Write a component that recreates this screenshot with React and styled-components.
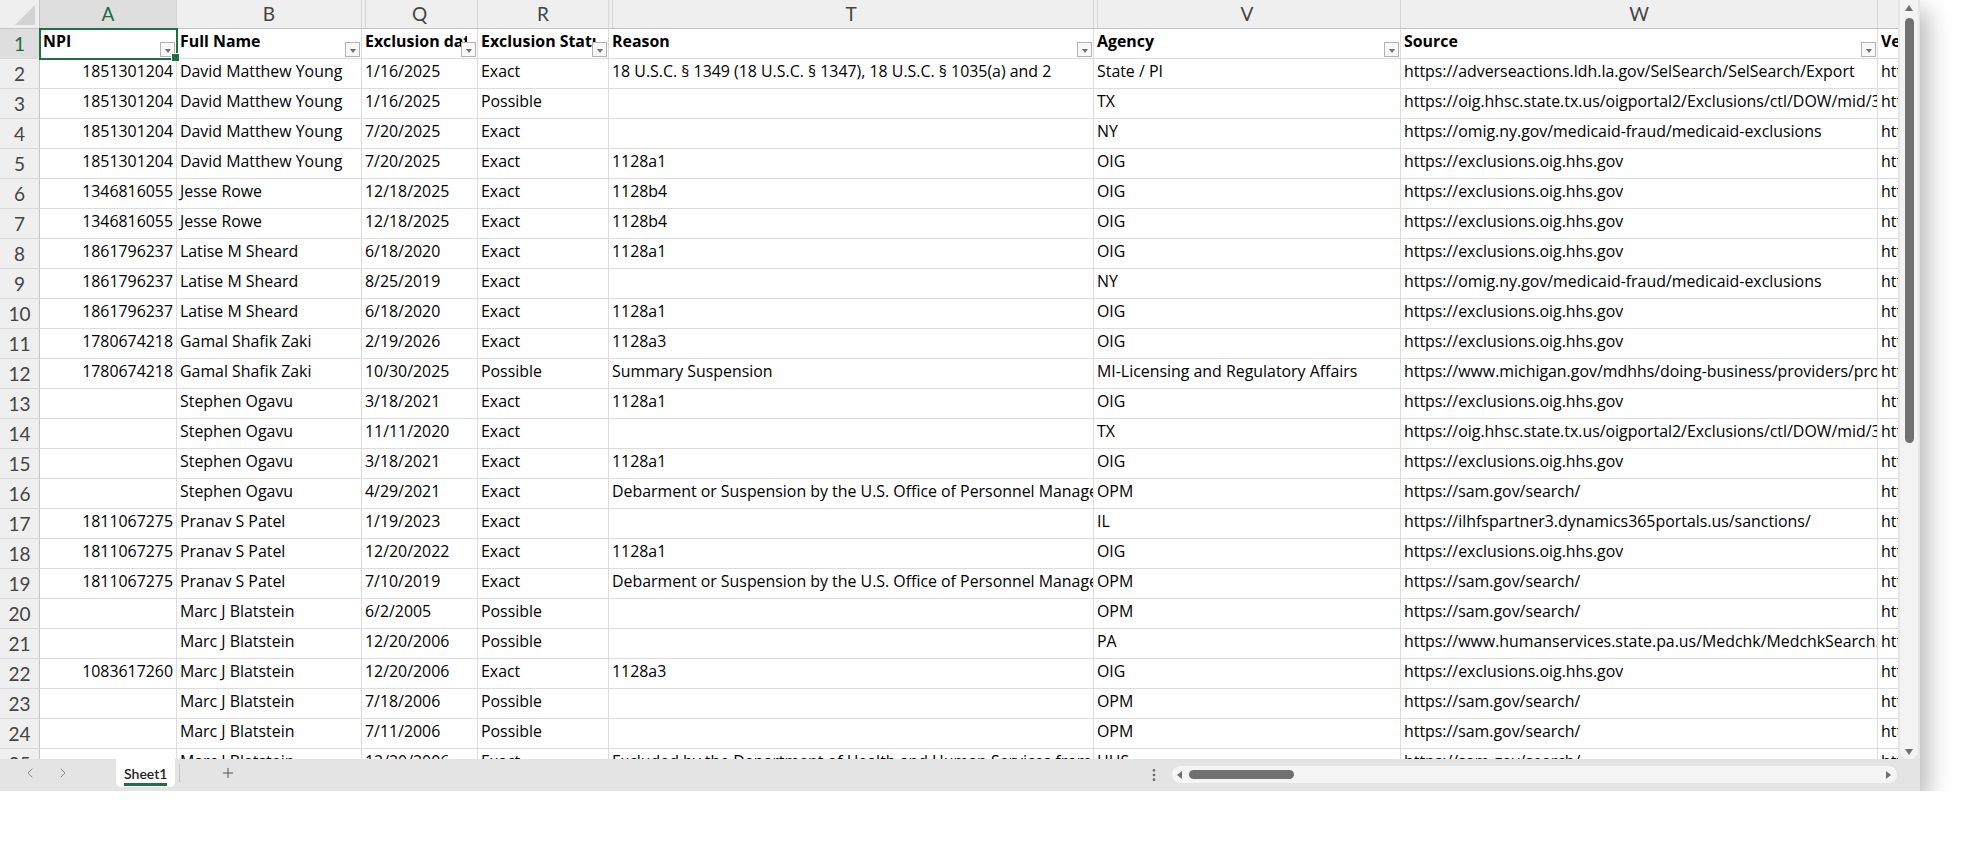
import React from 'react';
import styled, { createGlobalStyle } from 'styled-components';
import { ChevronLeft, ChevronRight, Plus, EllipsisVertical } from 'lucide-react';

const GlobalStyle = createGlobalStyle`
  html, body { margin: 0; background: #fff; overflow: hidden; }
  body { font-family: Lato, "Liberation Sans", sans-serif; color: #000; }
  * { box-sizing: border-box; }
`;

// visible columns, hidden ranges (C-P, S, U) leave a double line in the header
const COLS = [
  { letter: 'A', width: 137, align: 'right' },
  { letter: 'B', width: 185 },
  { letter: 'Q', width: 116, gap: true },
  { letter: 'R', width: 131 },
  { letter: 'T', width: 485, gap: true },
  { letter: 'V', width: 307, gap: true },
  { letter: 'W', width: 477 },
  { letter: 'X', width: 80 },
];
const TEMPLATE = `40px ${COLS.map(c => c.width + 'px').join(' ')}`;

const HEADERS = ['NPI', 'Full Name', 'Exclusion date', 'Exclusion Status', 'Reason', 'Agency', 'Source', 'Verification Link'];

const OIG = 'https://exclusions.oig.hhs.gov';
const SAM = 'https://sam.gov/search/';
const TXS = 'https://oig.hhsc.state.tx.us/oigportal2/Exclusions/ctl/DOW/mid/384/Default.aspx';
const NYS = 'https://omig.ny.gov/medicaid-fraud/medicaid-exclusions';
const OPM = 'Debarment or Suspension by the U.S. Office of Personnel Management';

const ROWS = [
  ['1851301204', 'David Matthew Young', '1/16/2025', 'Exact', '18 U.S.C. § 1349 (18 U.S.C. § 1347), 18 U.S.C. § 1035(a) and 2', 'State / PI', 'https://adverseactions.ldh.la.gov/SelSearch/SelSearch/Export'],
  ['1851301204', 'David Matthew Young', '1/16/2025', 'Possible', '', 'TX', TXS],
  ['1851301204', 'David Matthew Young', '7/20/2025', 'Exact', '', 'NY', NYS],
  ['1851301204', 'David Matthew Young', '7/20/2025', 'Exact', '1128a1', 'OIG', OIG],
  ['1346816055', 'Jesse Rowe', '12/18/2025', 'Exact', '1128b4', 'OIG', OIG],
  ['1346816055', 'Jesse Rowe', '12/18/2025', 'Exact', '1128b4', 'OIG', OIG],
  ['1861796237', 'Latise M Sheard', '6/18/2020', 'Exact', '1128a1', 'OIG', OIG],
  ['1861796237', 'Latise M Sheard', '8/25/2019', 'Exact', '', 'NY', NYS],
  ['1861796237', 'Latise M Sheard', '6/18/2020', 'Exact', '1128a1', 'OIG', OIG],
  ['1780674218', 'Gamal Shafik Zaki', '2/19/2026', 'Exact', '1128a3', 'OIG', OIG],
  ['1780674218', 'Gamal Shafik Zaki', '10/30/2025', 'Possible', 'Summary Suspension', 'MI-Licensing and Regulatory Affairs', 'https://www.michigan.gov/mdhhs/doing-business/providers/providers/sanctioned-providers'],
  ['', 'Stephen Ogavu', '3/18/2021', 'Exact', '1128a1', 'OIG', OIG],
  ['', 'Stephen Ogavu', '11/11/2020', 'Exact', '', 'TX', TXS],
  ['', 'Stephen Ogavu', '3/18/2021', 'Exact', '1128a1', 'OIG', OIG],
  ['', 'Stephen Ogavu', '4/29/2021', 'Exact', OPM, 'OPM', SAM],
  ['1811067275', 'Pranav S Patel', '1/19/2023', 'Exact', '', 'IL', 'https://ilhfspartner3.dynamics365portals.us/sanctions/'],
  ['1811067275', 'Pranav S Patel', '12/20/2022', 'Exact', '1128a1', 'OIG', OIG],
  ['1811067275', 'Pranav S Patel', '7/10/2019', 'Exact', OPM, 'OPM', SAM],
  ['', 'Marc J Blatstein', '6/2/2005', 'Possible', '', 'OPM', SAM],
  ['', 'Marc J Blatstein', '12/20/2006', 'Possible', '', 'PA', 'https://www.humanservices.state.pa.us/Medchk/MedchkSearch.aspx'],
  ['1083617260', 'Marc J Blatstein', '12/20/2006', 'Exact', '1128a3', 'OIG', OIG],
  ['', 'Marc J Blatstein', '7/18/2006', 'Possible', '', 'OPM', SAM],
  ['', 'Marc J Blatstein', '7/11/2006', 'Possible', '', 'OPM', SAM],
  ['', 'Marc J Blatstein', '12/20/2006', 'Exact', 'Excluded by the Department of Health and Human Services from participation', 'HHS', SAM],
];

const Window = styled.div`
  width: 1920px;
  height: 791px;
  display: flex;
  flex-direction: column;
  background: #e6e6e6;
  box-shadow: 8px 10px 22px rgba(0, 0, 0, 0.28);
  overflow: hidden;
`;

const Main = styled.div`
  display: flex;
  height: 759px;
`;

const Sheet = styled.div`
  width: 1898px;
  height: 759px;
  overflow: hidden;
  background: #fff;
`;

const Row = styled.div`
  display: grid;
  grid-template-columns: ${TEMPLATE};
  height: ${p => (p.$head ? 29 : 30)}px;
`;

const Corner = styled.div`
  display: flex;
  justify-content: flex-end;
  align-items: flex-end;
  padding: 0 4px 3px 0;
  background: #efefef;
  border-right: 1px solid #c4c4c4;
  border-bottom: 1px solid #c4c4c4;
`;

const ColHead = styled.div`
  background: ${p => (p.$active ? '#dedede' : '#efefef')};
  color: ${p => (p.$active ? '#1d6b40' : '#444')};
  border-right: 1px solid #d6d6d6;
  border-bottom: 1px solid #c4c4c4;
  font-size: 19px;
  line-height: 28px;
  text-align: center;
  overflow: hidden;
  box-shadow: ${p => (p.$gap ? 'inset 3px 0 0 #efefef, inset 4px 0 0 #d6d6d6' : 'none')};
`;

const RowHead = styled.div`
  background: ${p => (p.$active ? '#dedede' : '#efefef')};
  color: ${p => (p.$active ? '#1d6b40' : '#444')};
  border-right: 1px solid #c4c4c4;
  border-bottom: 1px solid #dadada;
  font-size: 19px;
  line-height: 29px;
  text-align: center;
`;

const Cell = styled.div`
  position: relative;
  padding: 0 3px;
  border-right: 1px solid #dcdcdc;
  border-bottom: 1px solid #dcdcdc;
  font-family: "Open Sans", Lato, sans-serif;
  font-size: 15.9px;
  line-height: 24px;
  white-space: nowrap;
  overflow: hidden;
  text-align: ${p => p.$align || 'left'};
`;

const HeadCell = styled(Cell)`
  display: flex;
  align-items: flex-start;
  padding-right: 1px;
  font-weight: 700;
  overflow: ${p => (p.$selected ? 'visible' : 'hidden')};
  z-index: ${p => (p.$selected ? 2 : 0)};
  outline: ${p => (p.$selected ? '2px solid #1e7145' : 'none')};
  outline-offset: -1px;

  &::after {
    content: '';
    display: ${p => (p.$selected ? 'block' : 'none')};
    position: absolute;
    right: -4px;
    bottom: -4px;
    width: 7px;
    height: 7px;
    background: #1e7145;
    border: 1px solid #fff;
  }
`;

const Label = styled.span`
  flex: 1;
  min-width: 0;
  overflow: hidden;
`;

const FilterButton = styled.span`
  align-self: flex-end;
  flex: none;
  width: 15px;
  height: 15px;
  margin-bottom: 1px;
  margin-left: -6px;
  border: 1px solid #b3b3b3;
  background: #f8f8f8;
  display: flex;
  align-items: center;
  justify-content: center;

  &::before {
    content: '';
    border-left: 3.5px solid transparent;
    border-right: 3.5px solid transparent;
    border-top: 4px solid #707070;
    margin-top: 2px;
  }
`;

const VScroll = styled.div`
  width: 22px;
  padding: 0 2px 0 2px;
  background: #e6e6e6;
`;

const VTrack = styled.div`
  height: 760px;
  border-radius: 0 0 9px 9px;
  background: #f3f3f3;
  display: flex;
  flex-direction: column;
  align-items: center;
  padding: 5px 0 5px;
`;

const VThumb = styled.div`
  width: 9px;
  height: 425px;
  margin-top: 7px;
  border-radius: 5px;
  background: #707070;
`;

const Spacer = styled.div`
  flex: 1;
`;

const Arrow = styled.span`
  width: 0;
  height: 0;
  ${p => p.$dir === 'up' && 'border-left: 4px solid transparent; border-right: 4px solid transparent; border-bottom: 6px solid #707070;'}
  ${p => p.$dir === 'down' && 'border-left: 4px solid transparent; border-right: 4px solid transparent; border-top: 6px solid #707070;'}
  ${p => p.$dir === 'left' && 'border-top: 4px solid transparent; border-bottom: 4px solid transparent; border-right: 5px solid #707070;'}
  ${p => p.$dir === 'right' && 'border-top: 4px solid transparent; border-bottom: 4px solid transparent; border-left: 5px solid #707070;'}
`;

const TabBar = styled.div`
  height: 32px;
  display: flex;
  align-items: flex-start;
  background: #e4e4e4;
`;

const SheetNav = styled.div`
  display: flex;
  align-items: center;
  gap: 17px;
  height: 28px;
  padding-left: 22px;
  color: #8c8c8c;
`;

const Tab = styled.div`
  height: 28px;
  margin-left: 45px;
  padding: 0 8px;
  background: #fff;
  border-radius: 0 0 5px 5px;
  display: flex;
  align-items: center;
`;

const TabLabel = styled.span`
  font-size: 14px;
  line-height: 18px;
  font-weight: 600;
  color: #222;
  border-bottom: 3px solid #1e7145;
  margin-top: 4px;
`;

const TabDivider = styled.div`
  width: 1px;
  height: 18px;
  margin: 5px 0 0 4px;
  background: #c6c6c6;
`;

const AddSheet = styled.div`
  height: 28px;
  margin-left: 40px;
  display: flex;
  align-items: center;
  color: #555;
`;

const Dots = styled.div`
  height: 32px;
  display: flex;
  align-items: center;
  color: #666;
`;

const HTrack = styled.div`
  width: 725px;
  height: 17px;
  margin: 7px 23px 0 10px;
  border-radius: 9px;
  background: #f5f5f5;
  display: flex;
  align-items: center;
  padding: 0 6px 0 5px;
  gap: 7px;
`;

const HThumb = styled.div`
  width: 105px;
  height: 9px;
  border-radius: 5px;
  background: #707070;
`;

const CornerMark = () => (
  <svg width="20" height="20" viewBox="0 0 20 20">
    <polygon points="20,0 20,20 0,20" fill="#d3d3d3" />
  </svg>
);

export default function App() {
  return (
    <>
      <GlobalStyle />
      <Window>
        <Main>
          <Sheet>
            <Row $head>
              <Corner><CornerMark /></Corner>
              {COLS.map((c, i) => (
                <ColHead key={c.letter} $gap={c.gap} $active={i === 0}>{c.letter}</ColHead>
              ))}
            </Row>
            <Row>
              <RowHead $active>1</RowHead>
              {HEADERS.map((h, i) => (
                <HeadCell key={h} $selected={i === 0}>
                  <Label>{h}</Label>
                  <FilterButton />
                </HeadCell>
              ))}
            </Row>
            {ROWS.map((r, n) => (
              <Row key={n}>
                <RowHead>{n + 2}</RowHead>
                {r.map((v, i) => (
                  <Cell key={i} $align={COLS[i].align}>{v}</Cell>
                ))}
                <Cell>https://</Cell>
              </Row>
            ))}
          </Sheet>
          <VScroll>
            <VTrack>
              <Arrow $dir="up" />
              <VThumb />
              <Spacer />
              <Arrow $dir="down" />
            </VTrack>
          </VScroll>
        </Main>
        <TabBar>
          <SheetNav>
            <ChevronLeft size={16} strokeWidth={1.5} />
            <ChevronRight size={16} strokeWidth={1.5} />
          </SheetNav>
          <Tab><TabLabel>Sheet1</TabLabel></Tab>
          <TabDivider />
          <AddSheet><Plus size={16} strokeWidth={1.5} /></AddSheet>
          <Spacer />
          <Dots><EllipsisVertical size={16} strokeWidth={2} /></Dots>
          <HTrack>
            <Arrow $dir="left" />
            <HThumb />
            <Spacer />
            <Arrow $dir="right" />
          </HTrack>
        </TabBar>
      </Window>
    </>
  );
}
